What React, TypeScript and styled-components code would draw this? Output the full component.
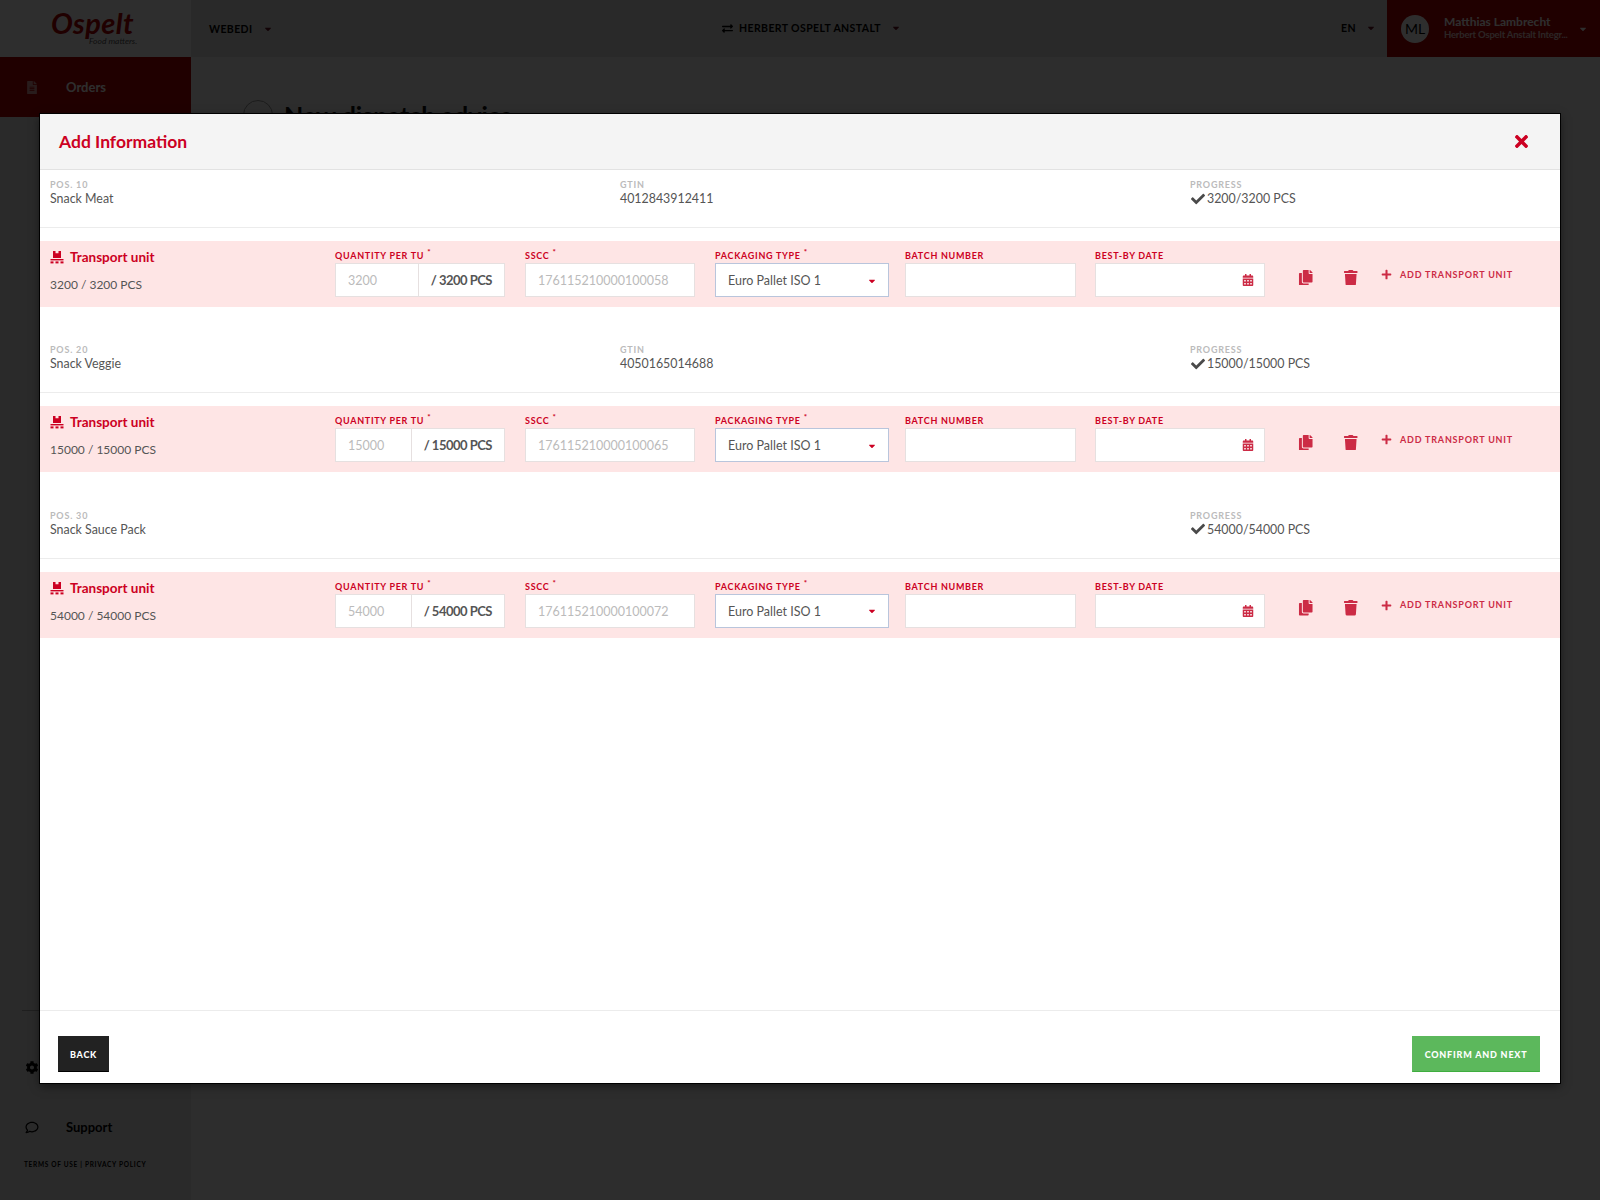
import * as React from 'react';
import styled, { createGlobalStyle } from 'styled-components';
import {
  FaCalendarAlt,
  FaCaretDown,
  FaCheck,
  FaCog,
  FaCopy,
  FaExchangeAlt,
  FaFileAlt,
  FaPlus,
  FaRegComment,
  FaTimes,
  FaTrash,
} from 'react-icons/fa';

const RED = '#cc0022';
const DEEP_RED = '#b00000';
const TEXT = '#555';

const GlobalStyle = createGlobalStyle`
  html, body {
    margin: 0;
    height: 100%;
    font-family: Lato, "Liberation Sans", sans-serif;
    background: #fff;
  }
  * {
    box-sizing: border-box;
  }
`;

const Page = styled.div`
  position: relative;
  width: 1600px;
  height: 1200px;
  overflow: hidden;
  display: grid;
  grid-template-columns: 191px 1fr;
  grid-template-rows: 57px 1fr;
  background: #f8f8f8;
`;

const LogoCell = styled.div`
  background: #fff;
  display: flex;
  flex-direction: column;
  align-items: flex-start;
  padding: 9px 0 0 51px;
  color: ${DEEP_RED};
`;

const LogoMark = styled.div`
  font-size: 29px;
  line-height: 28px;
  font-weight: 700;
  font-style: italic;
  letter-spacing: 0.4px;
`;

const LogoTag = styled.div`
  font-size: 8.5px;
  line-height: 9px;
  font-style: italic;
  color: #555;
  margin: 0 0 0 38px;
`;

const TopBar = styled.header`
  display: grid;
  grid-template-columns: 1fr 1fr 1fr;
  align-items: center;
  background: #e0e0e0;
  position: relative;
  padding-left: 18px;
`;

const Menu = styled.div`
  display: flex;
  align-items: center;
  font-size: 10.5px;
  font-weight: 700;
  letter-spacing: 0.4px;
  color: #000;
  white-space: nowrap;
`;

const CenterMenu = styled(Menu)`
  position: absolute;
  left: 531px;
  top: 22px;
`;

const LangMenu = styled(Menu)`
  position: absolute;
  left: 1150px;
  top: 22px;
`;

const Caret = styled(FaCaretDown)<{ $gap?: number; $color?: string }>`
  font-size: 10px;
  margin-left: ${(p) => p.$gap ?? 10}px;
  color: ${(p) => p.$color ?? '#661122'};
`;

const ExchangeIcon = styled(FaExchangeAlt)`
  font-size: 11px;
  margin-right: 6px;
`;

const UserCell = styled.div`
  position: absolute;
  top: 0;
  right: 0;
  width: 213px;
  height: 57px;
  background: ${DEEP_RED};
  display: flex;
  align-items: center;
  padding-left: 14px;
  color: #fff;
`;

const Avatar = styled.div`
  width: 28px;
  height: 28px;
  border-radius: 50%;
  background: #fff;
  color: #000;
  display: flex;
  align-items: center;
  justify-content: center;
  font-size: 14px;
  margin-right: 15px;
  flex: none;
`;

const UserText = styled.div`
  flex: 1;
  min-width: 0;
  margin-top: -2px;
`;

const UserName = styled.div`
  font-size: 12px;
  line-height: 14px;
  font-weight: 700;
`;

const UserOrg = styled.div`
  font-size: 9.5px;
  line-height: 12px;
  font-weight: 700;
  letter-spacing: -0.2px;
  white-space: nowrap;
  opacity: 0.8;
`;

const UserCaret = styled(FaCaretDown)`
  font-size: 10px;
  color: #fff;
  margin: 0 12px;
`;

const Sidebar = styled.aside`
  background: #e8e8e8;
  display: flex;
  flex-direction: column;
`;

const NavItem = styled.div<{ $active?: boolean }>`
  height: 60px;
  flex: none;
  display: flex;
  align-items: center;
  padding-left: 25px;
  font-size: 13px;
  font-weight: 700;
  color: ${(p) => (p.$active ? '#fff' : '#000')};
  background: ${(p) => (p.$active ? DEEP_RED : 'transparent')};
  svg {
    font-size: 13px;
    width: 14px;
    margin-right: 27px;
    opacity: ${(p) => (p.$active ? 0.6 : 1)};
  }
`;

const SideFooter = styled.div`
  margin-top: auto;
  padding-bottom: 32px;
`;

const SideRule = styled.div`
  height: 1px;
  background: #aaa;
  margin: 0 22px 26px;
`;

const Terms = styled.div`
  font-size: 6.5px;
  letter-spacing: 0.7px;
  font-weight: 700;
  color: #000;
  padding: 4px 0 0 24px;
  text-transform: uppercase;
`;

const Main = styled.main`
  padding: 43px 0 0 52px;
  display: flex;
  gap: 11px;
`;

const BackCircle = styled.div`
  width: 30px;
  height: 30px;
  border-radius: 50%;
  border: 1px solid #999;
`;

const PageTitle = styled.h1`
  margin: 0;
  font-size: 25px;
  line-height: 30px;
  font-weight: 700;
  color: #111;
`;

const Backdrop = styled.div`
  position: absolute;
  inset: 0;
  background: rgba(0, 0, 0, 0.82);
`;

const Modal = styled.div`
  position: absolute;
  left: 40px;
  top: 114px;
  width: 1520px;
  height: 969px;
  display: flex;
  flex-direction: column;
  background: #fff;
  outline: 1px solid #000;
  box-shadow: 0 3px 9px rgba(0, 0, 0, 0.5);
`;

const ModalHeader = styled.div`
  height: 56px;
  flex: none;
  background: #f4f4f4;
  border-bottom: 1px solid #e2e2e2;
  display: flex;
  align-items: center;
  justify-content: space-between;
  padding: 0 29px 0 19px;
`;

const ModalTitle = styled.div`
  font-size: 17.5px;
  font-weight: 700;
  color: ${RED};
`;

const CloseIcon = styled(FaTimes)`
  font-size: 19px;
  color: ${RED};
`;

const ModalBody = styled.div`
  flex: 1;
  min-height: 0;
`;

const InfoRow = styled.div`
  height: 58px;
  border-bottom: 1px solid #ececec;
  display: grid;
  grid-template-columns: 570px 570px 1fr;
  padding: 9px 0 0 10px;
  margin-bottom: 13px;
`;

const InfoLabel = styled.div`
  font-size: 9px;
  line-height: 11px;
  font-weight: 700;
  letter-spacing: 0.8px;
  color: #bbb;
  text-transform: uppercase;
`;

const InfoValue = styled.div`
  font-size: 12.4px;
  line-height: 17px;
  color: ${TEXT};
  display: flex;
  align-items: center;
`;

const CheckIcon = styled(FaCheck)`
  font-size: 14px;
  margin: 0 2px 0 1px;
  color: #4a4a4a;
`;

const UnitRow = styled.div`
  height: 66px;
  background: #fee5e5;
  display: grid;
  grid-template-columns: 285px 190px 190px 190px 190px 170px 1fr;
  padding-left: 10px;
  margin-bottom: 28.4px;
`;

const UnitHead = styled.div`
  padding-top: 7px;
`;

const UnitTitle = styled.div`
  display: flex;
  align-items: center;
  gap: 6px;
  font-size: 13.5px;
  line-height: 18px;
  font-weight: 700;
  color: ${RED};
`;

const UnitCount = styled.div`
  font-size: 12px;
  line-height: 17px;
  margin-top: 10px;
  color: ${TEXT};
`;

const Field = styled.div<{ $width: number }>`
  width: ${(p) => p.$width}px;
  padding-top: 9px;
`;

const FieldLabel = styled.div`
  font-size: 9px;
  line-height: 11px;
  height: 13px;
  font-weight: 700;
  letter-spacing: 0.7px;
  color: ${RED};
  text-transform: uppercase;
  white-space: nowrap;
  sup {
    font-size: 8px;
    line-height: 0;
    margin-left: 3px;
  }
`;

const InputBox = styled.div`
  height: 34px;
  background: #fff;
  border: 1px solid #e6e0e0;
  display: flex;
  align-items: center;
`;

const Input = styled.input`
  flex: 1;
  min-width: 0;
  width: 100%;
  height: 100%;
  border: 0;
  outline: 0;
  background: transparent;
  padding: 1px 12px 0;
  font: 12.5px Lato, "Liberation Sans", sans-serif;
  color: #bbb;
`;

const Suffix = styled.div`
  flex: none;
  height: 100%;
  display: flex;
  align-items: center;
  padding: 0 12px;
  border-left: 1px solid #e6e0e0;
  font-size: 13px;
  font-weight: 700;
  letter-spacing: -0.5px;
  color: ${TEXT};
  white-space: nowrap;
`;

const SelectBox = styled(InputBox)`
  border-color: #b9c5dc;
  justify-content: space-between;
  padding: 1px 11px 0 12px;
  font-size: 12.5px;
  color: ${TEXT};
`;

const DateBox = styled(InputBox)`
  justify-content: flex-end;
  padding-right: 10px;
  color: #cc2b45;
  font-size: 12px;
`;

const Actions = styled.div`
  display: flex;
  align-items: flex-start;
  padding: 28.5px 0 0 33px;
  color: #cc2b45;
`;

const IconButton = styled.div`
  width: 45px;
  flex: none;
  font-size: 15.5px;
  line-height: 15px;
`;

const AddUnit = styled.div`
  display: flex;
  align-items: center;
  gap: 8px;
  margin: -1px 0 0 -7px;
  font-size: 9px;
  line-height: 12px;
  font-weight: 700;
  letter-spacing: 0.8px;
  white-space: nowrap;
  svg {
    font-size: 11px;
  }
`;

const ModalFooter = styled.div`
  height: 73px;
  flex: none;
  border-top: 1px solid #ececec;
  display: flex;
  align-items: flex-start;
  justify-content: space-between;
  padding: 25px 20px 0 18px;
`;

const FooterButton = styled.div<{ $bg: string; $edge: string }>`
  height: 36px;
  display: flex;
  align-items: center;
  padding: 0 11px;
  background: ${(p) => p.$bg};
  border: 1px solid ${(p) => p.$bg};
  border-bottom-color: ${(p) => p.$edge};
  color: #fff;
  font-size: 9px;
  font-weight: 900;
  letter-spacing: 0.7px;
`;

const ConfirmButton = styled(FooterButton)`
  padding: 0 11.5px;
  letter-spacing: 0.8px;
`;

const PalletIcon = () => (
  <svg width="14" height="14" viewBox="0 0 14 14" fill={RED}>
    <path d="M3 1h2.5v2.2h3V1H11v7H3z" />
    <rect x="0.5" y="9" width="13" height="1.4" />
    <rect x="0.5" y="11.4" width="3" height="2" />
    <rect x="5.5" y="11.4" width="3" height="2" />
    <rect x="10.5" y="11.4" width="3" height="2" />
  </svg>
);

interface Position {
  pos: string;
  name: string;
  gtin?: string;
  qty: string;
  sscc: string;
}

const positions: Position[] = [
  { pos: '10', name: 'Snack Meat', gtin: '4012843912411', qty: '3200', sscc: '176115210000100058' },
  { pos: '20', name: 'Snack Veggie', gtin: '4050165014688', qty: '15000', sscc: '176115210000100065' },
  { pos: '30', name: 'Snack Sauce Pack', qty: '54000', sscc: '176115210000100072' },
];

const PositionBlock: React.FC<Position> = ({ pos, name, gtin, qty, sscc }) => (
  <>
    <InfoRow>
      <div>
        <InfoLabel>Pos. {pos}</InfoLabel>
        <InfoValue>{name}</InfoValue>
      </div>
      <div>
        {gtin && (
          <>
            <InfoLabel>GTIN</InfoLabel>
            <InfoValue>{gtin}</InfoValue>
          </>
        )}
      </div>
      <div>
        <InfoLabel>Progress</InfoLabel>
        <InfoValue>
          <CheckIcon />
          {qty}/{qty} PCS
        </InfoValue>
      </div>
    </InfoRow>
    <UnitRow>
      <UnitHead>
        <UnitTitle>
          <PalletIcon />
          Transport unit
        </UnitTitle>
        <UnitCount>
          {qty} / {qty} PCS
        </UnitCount>
      </UnitHead>
      <Field $width={170}>
        <FieldLabel>
          Quantity per TU<sup>*</sup>
        </FieldLabel>
        <InputBox>
          <Input readOnly value={qty} />
          <Suffix>/ {qty} PCS</Suffix>
        </InputBox>
      </Field>
      <Field $width={170}>
        <FieldLabel>
          SSCC<sup>*</sup>
        </FieldLabel>
        <InputBox>
          <Input readOnly value={sscc} />
        </InputBox>
      </Field>
      <Field $width={174}>
        <FieldLabel>
          Packaging type<sup>*</sup>
        </FieldLabel>
        <SelectBox>
          Euro Pallet ISO 1
          <Caret $gap={0} $color={RED} />
        </SelectBox>
      </Field>
      <Field $width={171}>
        <FieldLabel>Batch number</FieldLabel>
        <InputBox>
          <Input readOnly />
        </InputBox>
      </Field>
      <Field $width={170}>
        <FieldLabel>Best-by date</FieldLabel>
        <DateBox>
          <FaCalendarAlt />
        </DateBox>
      </Field>
      <Actions>
        <IconButton>
          <FaCopy />
        </IconButton>
        <IconButton>
          <FaTrash />
        </IconButton>
        <AddUnit>
          <FaPlus />
          ADD TRANSPORT UNIT
        </AddUnit>
      </Actions>
    </UnitRow>
  </>
);

export default function App() {
  return (
    <>
      <GlobalStyle />
      <Page>
        <LogoCell>
          <LogoMark>Ospelt</LogoMark>
          <LogoTag>Food matters.</LogoTag>
        </LogoCell>
        <TopBar>
          <Menu>
            WEBEDI
            <Caret />
          </Menu>
          <CenterMenu>
            <ExchangeIcon />
            HERBERT OSPELT ANSTALT
            <Caret />
          </CenterMenu>
          <LangMenu>
            EN
            <Caret />
          </LangMenu>
          <UserCell>
            <Avatar>ML</Avatar>
            <UserText>
              <UserName>Matthias Lambrecht</UserName>
              <UserOrg>Herbert Ospelt Anstalt Integr...</UserOrg>
            </UserText>
            <UserCaret />
          </UserCell>
        </TopBar>
        <Sidebar>
          <NavItem $active>
            <FaFileAlt />
            Orders
          </NavItem>
          <SideFooter>
            <SideRule />
            <NavItem>
              <FaCog />
              Settings
            </NavItem>
            <NavItem>
              <FaRegComment />
              Support
            </NavItem>
            <Terms>Terms of use | Privacy policy</Terms>
          </SideFooter>
        </Sidebar>
        <Main>
          <BackCircle />
          <PageTitle>New dispatch advice</PageTitle>
        </Main>
        <Backdrop />
        <Modal>
          <ModalHeader>
            <ModalTitle>Add Information</ModalTitle>
            <CloseIcon />
          </ModalHeader>
          <ModalBody>
            {positions.map((p) => (
              <PositionBlock key={p.pos} {...p} />
            ))}
          </ModalBody>
          <ModalFooter>
            <FooterButton $bg="#222" $edge="#000">BACK</FooterButton>
            <ConfirmButton $bg="#5cb85c" $edge="#3fae3f">CONFIRM AND NEXT</ConfirmButton>
          </ModalFooter>
        </Modal>
      </Page>
    </>
  );
}
